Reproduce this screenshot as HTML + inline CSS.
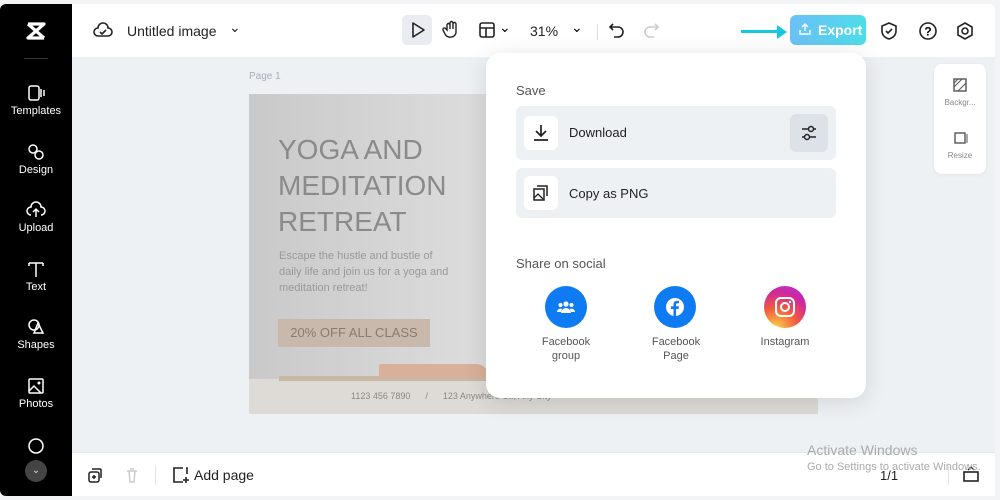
<!DOCTYPE html>
<html><head><meta charset="utf-8"><style>
*{box-sizing:border-box;margin:0;padding:0}
body{width:1000px;height:500px;background:#f3f4f6;font-family:"Liberation Sans",sans-serif;position:relative;overflow:hidden}
.a{position:absolute}
.side{left:0;top:4px;width:72px;height:492px;background:#000;border-radius:6px 0 0 6px}
.si{position:absolute;left:0;width:72px;text-align:center;color:#fff;font-size:11px}
.si svg{display:block;margin:0 auto 3px}
.top{left:72px;top:4px;width:923px;height:53px;background:#fff;border-radius:0 6px 0 0}
.canvas{left:72px;top:57px;width:923px;height:395px;background:#eef1f4}
.bot{left:72px;top:452px;width:923px;height:44px;background:#fff;border-top:1px solid #e5e7eb}
.pop{left:486px;top:53px;width:380px;height:345px;background:#fff;border-radius:14px;box-shadow:0 4px 24px rgba(0,0,0,.12)}
.row{position:absolute;left:30px;width:320px;background:#eef1f4;border-radius:6px}
.ib{position:absolute;left:8px;width:34px;height:34px;background:#fff;border-radius:6px}
.soc{position:absolute;top:233px;width:42px;height:42px;border-radius:50%}
.sl{position:absolute;top:282px;width:80px;text-align:center;font-size:11px;color:#555;line-height:14px}
</style></head><body>
<div class="a side">
 <svg class="a" style="left:24px;top:17px" width="24" height="20" viewBox="0 0 24 20"><path d="M4 3h16L4 17h16M4 3l16 14" stroke="#fff" stroke-width="3.2" fill="none" stroke-linejoin="round"/></svg>
 <div class="a" style="left:24px;top:54px;width:24px;height:1px;background:#333"></div>
 <div class="si" style="top:80px"><svg width="20" height="18"><rect x="3" y="2" width="10" height="14" rx="2" stroke="#fff" stroke-width="1.5" fill="none"/><path d="M15 5v8M18 6v6" stroke="#fff" stroke-width="1.5"/></svg>Templates</div>
 <div class="si" style="top:139px"><svg width="20" height="18"><circle cx="7" cy="6" r="4" stroke="#fff" stroke-width="1.5" fill="none"/><circle cx="13" cy="12" r="4" stroke="#fff" stroke-width="1.5" fill="none"/></svg>Design</div>
 <div class="si" style="top:197px"><svg width="20" height="18"><path d="M5 14a4 4 0 0 1 0-8 5 5 0 0 1 10 0 4 4 0 0 1 0 8M10 16V8M7 11l3-3 3 3" stroke="#fff" stroke-width="1.5" fill="none"/></svg>Upload</div>
 <div class="si" style="top:256px"><svg width="20" height="18"><path d="M3 3h14M10 3v14M3 3v3M17 3v3" stroke="#fff" stroke-width="1.5" fill="none"/></svg>Text</div>
 <div class="si" style="top:314px"><svg width="20" height="18"><circle cx="8" cy="7" r="5" stroke="#fff" stroke-width="1.5" fill="none"/><path d="M12 5l5 10H8z" stroke="#fff" stroke-width="1.5" fill="none"/></svg>Shapes</div>
 <div class="si" style="top:373px"><svg width="20" height="18"><rect x="3" y="2" width="14" height="14" rx="1" stroke="#fff" stroke-width="1.5" fill="none"/><path d="M3 14l5-5 7 7" stroke="#fff" stroke-width="1.5" fill="none"/><circle cx="13" cy="6" r="1.5" fill="#fff"/></svg>Photos</div>
 <svg class="a" style="left:26px;top:432px" width="20" height="20"><circle cx="10" cy="10" r="7" stroke="#fff" stroke-width="1.5" fill="none"/></svg>
 <div class="a" style="left:25px;top:456px;width:22px;height:22px;border-radius:50%;background:#444;color:#ddd;font-size:10px;text-align:center;line-height:22px">⌄</div>
</div>
<div class="a" style="left:72px;top:228px;width:6px;height:48px;background:#222;border-radius:0 6px 6px 0"></div>
<div class="a top">
 <svg class="a" style="left:21px;top:18px" width="20" height="18"><path d="M5 14a4 4 0 0 1 0-8 5 5 0 0 1 10 0 4 4 0 0 1 0 8z M7 10l2 2 4-4" stroke="#222" stroke-width="1.6" fill="none"/></svg>
 <div class="a" style="left:55px;top:19px;font-size:14px;color:#222">Untitled image</div>
 <div class="a" style="left:157px;top:15px;font-size:14px;color:#222">⌄</div>
 <div class="a" style="left:330px;top:11px;width:30px;height:30px;background:#e9edf2;border-radius:5px"></div>
 <svg class="a" style="left:337px;top:17px" width="18" height="18"><path d="M4 2l11 7-11 7z" stroke="#222" stroke-width="1.6" fill="none" stroke-linejoin="round"/></svg>
 <svg class="a" style="left:370px;top:16px" width="18" height="20"><path d="M5 10V5a1.5 1.5 0 0 1 3 0v4V3a1.5 1.5 0 0 1 3 0v6V4a1.5 1.5 0 0 1 3 0v9a6 6 0 0 1-11 1l-2-4a1.5 1.5 0 0 1 3-1z" stroke="#222" stroke-width="1.4" fill="none"/></svg>
 <svg class="a" style="left:406px;top:17px" width="18" height="18"><rect x="2" y="2" width="14" height="14" rx="2" stroke="#222" stroke-width="1.6" fill="none"/><path d="M2 7h14M8 7v9" stroke="#222" stroke-width="1.6"/></svg>
 <div class="a" style="left:427px;top:15px;font-size:14px">⌄</div>
 <div class="a" style="left:458px;top:19px;font-size:14px;color:#222">31%</div>
 <div class="a" style="left:499px;top:15px;font-size:14px">⌄</div>
 <div class="a" style="left:525px;top:20px;width:1px;height:16px;background:#ddd"></div>
 <svg class="a" style="left:536px;top:17px" width="18" height="18"><path d="M5 3L2 6l3 3M2 6h8a5 5 0 0 1 0 10H6" stroke="#222" stroke-width="1.6" fill="none"/></svg>
 <svg class="a" style="left:570px;top:17px" width="18" height="18"><path d="M13 3l3 3-3 3M16 6H8a5 5 0 0 0 0 10h4" stroke="#ccc" stroke-width="1.6" fill="none"/></svg>
 <div class="a" style="left:669px;top:26px;width:40px;height:3px;background:#14c8e0"></div>
 <div class="a" style="left:705px;top:21px;border-left:10px solid #14c8e0;border-top:7px solid transparent;border-bottom:7px solid transparent"></div>
 <div class="a" style="left:718px;top:11px;width:76px;height:30px;border-radius:6px;background:linear-gradient(90deg,#6cc0f5,#4cdde9);color:#fff;font-size:14px;font-weight:bold;line-height:30px;padding-left:28px">Export</div>
 <svg class="a" style="left:726px;top:18px" width="14" height="14"><path d="M2 8v4h10V8M7 9V2M4 5l3-3 3 3" stroke="#fff" stroke-width="1.4" fill="none"/></svg>
 <svg class="a" style="left:808px;top:17px" width="18" height="20"><path d="M9 2l7 3v5c0 4-3 7-7 8-4-1-7-4-7-8V5z M6 10l2 2 4-4" stroke="#222" stroke-width="1.6" fill="none"/></svg>
 <svg class="a" style="left:846px;top:17px" width="20" height="20"><circle cx="10" cy="10" r="8" stroke="#222" stroke-width="1.6" fill="none"/><text x="10" y="14.5" font-size="12" font-weight="bold" text-anchor="middle" font-family="Liberation Sans">?</text></svg>
 <svg class="a" style="left:883px;top:17px" width="20" height="20"><path d="M10 2l7 4v8l-7 4-7-4V6z" stroke="#222" stroke-width="1.6" fill="none"/><circle cx="10" cy="10" r="3" stroke="#222" stroke-width="1.6" fill="none"/></svg>
</div>
<div class="a canvas"></div>
<div class="a" style="left:249px;top:71px;font-size:10px;color:#aab">Page 1</div>
<div class="a" style="left:249px;top:94px;width:569px;height:320px;background:linear-gradient(90deg,#c9c9c9,#dcdcdc 40%,#e6e6e6);overflow:hidden">
 <div class="a" style="left:29px;top:38px;font-size:28px;line-height:36px;color:#8a8a8a">YOGA AND<br>MEDITATION<br>RETREAT</div>
 <div class="a" style="left:30px;top:154px;font-size:11px;line-height:16px;color:#999">Escape the hustle and bustle of<br>daily life and join us for a yoga and<br>meditation retreat!</div>
 <div class="a" style="left:29px;top:225px;width:152px;height:28px;background:#c9b9ad;color:#8a7a70;font-size:13px;line-height:28px;text-align:center">20% OFF ALL CLASS</div>
 <div class="a" style="left:0;top:285px;width:569px;height:35px;background:#dedbd6"></div>
 <div class="a" style="left:30px;top:282px;width:300px;height:5px;background:#c9b8a4"></div>
 <div class="a" style="left:130px;top:270px;width:110px;height:14px;background:#d9b09a;border-radius:8px 50px 4px 4px"></div>
 <div class="a" style="left:102px;top:297px;font-size:9px;color:#888">1123 456 7890 &nbsp;&nbsp;&nbsp;&nbsp;&nbsp;/&nbsp;&nbsp;&nbsp;&nbsp;&nbsp; 123 Anywhere St., Any City</div>
</div>
<div class="a" style="left:934px;top:64px;width:52px;height:110px;background:#fff;border-radius:8px;box-shadow:0 1px 4px rgba(0,0,0,.06)">
 <svg class="a" style="left:19px;top:14px" width="14" height="14"><rect x="1" y="1" width="12" height="12" stroke="#555" stroke-width="1.4" fill="none"/><path d="M1 9l8-8M5 13l8-8M1 5l4-4" stroke="#555"/></svg>
 <div class="a" style="left:0;top:34px;width:52px;text-align:center;font-size:8px;color:#888">Backgr...</div>
 <svg class="a" style="left:19px;top:67px" width="16" height="14"><rect x="2" y="2" width="10" height="10" stroke="#555" stroke-width="1.4" fill="none"/><path d="M14 3v9" stroke="#555"/></svg>
 <div class="a" style="left:0;top:87px;width:52px;text-align:center;font-size:8px;color:#888">Resize</div>
</div>
<div class="a bot">
 <svg class="a" style="left:15px;top:14px" width="16" height="16"><rect x="2" y="5" width="10" height="10" rx="2" stroke="#222" stroke-width="1.5" fill="none"/><path d="M5 2h8a1 1 0 0 1 1 1v8M7 8v4M5 10h4" stroke="#222" stroke-width="1.5" fill="none"/></svg>
 <svg class="a" style="left:52px;top:14px" width="16" height="16"><path d="M3 4h10M5 4l1 11h4l1-11M6 2h4" stroke="#ccc" stroke-width="1.5" fill="none"/></svg>
 <div class="a" style="left:83px;top:12px;width:1px;height:20px;background:#e5e5e5"></div>
 <svg class="a" style="left:100px;top:13px" width="18" height="18"><path d="M11 2H2v14h9M14 2h1v6M14 11v6M11 14h6" stroke="#222" stroke-width="1.6" fill="none"/></svg>
 <div class="a" style="left:122px;top:14px;font-size:14px;color:#222">Add page</div>
 <div class="a" style="left:808px;top:15px;font-size:13px;color:#222">1/1</div>
 <div class="a" style="left:876px;top:10px;width:1px;height:22px;background:#e5e5e5"></div>
 <svg class="a" style="left:890px;top:12px" width="18" height="18"><rect x="2" y="7" width="14" height="9" stroke="#222" stroke-width="1.6" fill="none"/><path d="M6 5l3-3 3 3" stroke="#222" stroke-width="1.4" fill="none"/></svg>
</div>
<div class="a" style="left:807px;top:442px;font-size:14px;color:#aaa">Activate Windows</div>
<div class="a" style="left:807px;top:461px;font-size:11px;color:#aaa">Go to Settings to activate Windows.</div>
<div class="a pop">
 <div class="a" style="left:30px;top:30px;font-size:13px;color:#555">Save</div>
 <div class="row" style="top:53px;height:54px">
  <div class="ib" style="top:10px"><svg style="margin:7px" width="20" height="20"><path d="M10 2v11M5 8l5 5 5-5M3 17h14" stroke="#222" stroke-width="1.7" fill="none"/></svg></div>
  <div class="a" style="left:53px;top:19px;font-size:13px;color:#222">Download</div>
  <div class="a" style="left:274px;top:8px;width:38px;height:38px;background:#dde2e8;border-radius:6px"><svg style="margin:9px" width="20" height="20"><path d="M3 6h14M3 14h14" stroke="#222" stroke-width="1.5"/><circle cx="12" cy="6" r="2.5" fill="#dde2e8" stroke="#222" stroke-width="1.5"/><circle cx="8" cy="14" r="2.5" fill="#dde2e8" stroke="#222" stroke-width="1.5"/></svg></div>
 </div>
 <div class="row" style="top:115px;height:50px">
  <div class="ib" style="top:8px"><svg style="margin:8px" width="18" height="18"><rect x="2" y="5" width="10" height="11" stroke="#222" stroke-width="1.5" fill="none"/><path d="M5 2h10v10" stroke="#222" stroke-width="1.5" fill="none"/><path d="M2 14l4-4 5 5" stroke="#222" stroke-width="1.3" fill="none"/></svg></div>
  <div class="a" style="left:53px;top:18px;font-size:13px;color:#222">Copy as PNG</div>
 </div>
 <div class="a" style="left:30px;top:203px;font-size:13px;color:#555">Share on social</div>
 <div class="soc" style="left:59px;background:#0f7bf2"><svg style="margin:11px" width="20" height="20"><circle cx="10" cy="7" r="2.6" fill="#fff"/><circle cx="4.5" cy="8" r="2" fill="#fff"/><circle cx="15.5" cy="8" r="2" fill="#fff"/><path d="M5 16a5 5 0 0 1 10 0zM1 15a3.5 3.5 0 0 1 5-3l-1 3zM19 15a3.5 3.5 0 0 0-5-3l1 3z" fill="#fff"/></svg></div>
 <div class="soc" style="left:168px;background:#0f7bf2"><svg style="margin:11px" width="20" height="20"><circle cx="10" cy="10" r="9" fill="#fff"/><path d="M11 19v-7h2.5l.4-2.7H11V7.6c0-.8.3-1.3 1.4-1.3H14V4c-.4 0-1.2-.1-2.1-.1-2 0-3.4 1.2-3.4 3.5v2H6V12h2.5v7z" fill="#0f7bf2"/></svg></div>
 <div class="soc" style="left:278px;background:radial-gradient(circle at 30% 100%,#fdd14a,#f35a3d 40%,#d0279c 70%,#a23ae2)"><svg style="margin:10px" width="22" height="22"><rect x="2" y="2" width="18" height="18" rx="5" stroke="#fff" stroke-width="2" fill="none"/><circle cx="11" cy="11" r="4" stroke="#fff" stroke-width="2" fill="none"/><circle cx="16" cy="6" r="1.2" fill="#fff"/></svg></div>
 <div class="sl" style="left:40px">Facebook<br>group</div>
 <div class="sl" style="left:150px">Facebook<br>Page</div>
 <div class="sl" style="left:259px">Instagram</div>
</div>
</body></html>
